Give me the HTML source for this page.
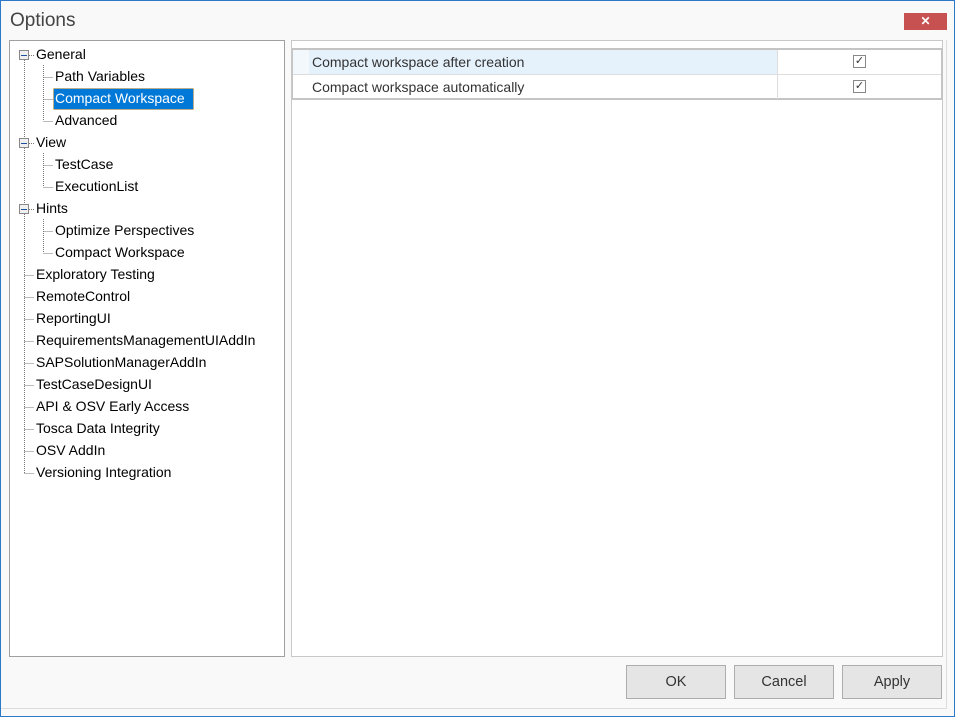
<!DOCTYPE html>
<html><head><meta charset="utf-8"><style>
body{margin:0;width:955px;height:717px;overflow:hidden;background:#fff;font-family:"Segoe UI","Liberation Sans",sans-serif}
.win{position:absolute;left:0;top:0;width:953px;height:715px;border:1px solid #2b79c7;background:#f9f9f9}
.title{position:absolute;left:9px;top:9px;font-size:19px;color:#444}
.close{position:absolute;left:903px;top:12px;width:43px;height:17px;background:#c75050;color:#fff;font-size:12px;text-align:center;line-height:17px;font-weight:bold}
.lp{position:absolute;left:9px;top:40px;width:274px;height:615px;border:1px solid #a0a0a0;background:#fff}
.rp{position:absolute;left:291px;top:40px;width:650px;height:615px;border:1px solid #c8c8c8;background:#fff}
.grid{position:absolute;left:0px;top:7px;width:648px;height:48px;border:2px solid #c4c4c4;border-left:1px solid #c4c4c4;border-right:2px solid #c4c4c4}
.row{position:absolute;left:0;width:648px;height:24px;font-size:14px;color:#333;line-height:24px}
.c1{position:absolute;left:0;width:484px;height:24px;padding-left:19px;box-sizing:border-box}
.c2{position:absolute;left:484px;width:164px;height:24px;border-left:1px solid #ddd}
.cb{position:absolute;left:75px;top:5px;width:11px;height:11px;border:1px solid #888;background:#fff;font-size:11px;line-height:11px;text-align:center;color:#333}
.btn{position:absolute;top:665px;width:100px;height:34px;border:1px solid #adadad;background:#e5e5e5;font-size:14.5px;color:#333;text-align:center;line-height:32px;box-sizing:border-box}
.bot{position:absolute;left:1px;top:708px;width:945px;height:0;border-top:1px solid #ddd}
.rgt{position:absolute;left:946px;top:40px;height:669px;border-left:1px solid #ddd}
</style></head><body>
<div class="win">
<div class="title">Options</div>
<div class="close">✕</div>
</div>
<div class="bot"></div><div class="rgt"></div>
<div class="lp">
<svg width="274" height="615" style="position:absolute;left:0;top:0" font-family="Segoe UI, Liberation Sans, sans-serif" font-size="14" fill="#000">
<g transform="translate(-9,-40)" stroke="#777" stroke-dasharray="1,1" stroke-width="1" fill="none">
<line x1="23.5" y1="59" x2="23.5" y2="472"/>
<line x1="42.5" y1="64" x2="42.5" y2="120"/>
<line x1="42.5" y1="152" x2="42.5" y2="186"/>
<line x1="42.5" y1="218" x2="42.5" y2="252"/>
<g id="h">
</g>
</g>
<g transform="translate(-9,-40)" id="t"></g>
</svg>
</div>
<div class="rp">
<div class="grid">
<div class="row" style="top:0"><div class="c1" style="background:#e5f1fb;border-left:16px solid #f3f8fc;padding-left:3px">Compact workspace after creation</div><div class="c2"><div class="cb">✓</div></div></div>
<div class="row" style="top:24px;border-top:1px solid #ddd"><div class="c1">Compact workspace automatically</div><div class="c2"><div class="cb">✓</div></div></div>
</div>
</div>
<div class="btn" style="left:626px">OK</div>
<div class="btn" style="left:734px">Cancel</div>
<div class="btn" style="left:842px">Apply</div>
<script>
var items=[["General",0,1],["Path Variables",1],["Compact Workspace",1],["Advanced",1],["View",0,1],["TestCase",1],["ExecutionList",1],["Hints",0,1],["Optimize Perspectives",1],["Compact Workspace",1],["Exploratory Testing",0],["RemoteControl",0],["ReportingUI",0],["RequirementsManagementUIAddIn",0],["SAPSolutionManagerAddIn",0],["TestCaseDesignUI",0],["API & OSV Early Access",0],["Tosca Data Integrity",0],["OSV AddIn",0],["Versioning Integration",0]];
var ns="http://www.w3.org/2000/svg",h=document.getElementById('h'),t=document.getElementById('t');
function el(p,n,a){var e=document.createElementNS(ns,n);for(var k in a)e.setAttribute(k,a[k]);p.appendChild(e);return e;}
items.forEach(function(it,i){var y=54+22*i,l=it[1];
var x0=l?42.5:23.5;
el(h,'line',{x1:it[2]?28:x0,y1:y+.5,x2:l?52:33,y2:y+.5});
if(i==2){el(t,'rect',{x:52.5,y:87.5,width:140,height:21,fill:'#0078d7',stroke:'#f0a030','stroke-dasharray':'1,1'});}
var tx=el(t,'text',{x:l?54:35,y:y+4,fill:i==2?'#fff':'#000'});tx.textContent=it[0];
if(it[2]){el(t,'rect',{x:18.5,y:y-4.5,width:9,height:9,fill:'#f0f0f0',stroke:'#888'});el(t,'line',{x1:20,y1:y+.5,x2:26,y2:y+.5,stroke:'#1e50a0'});}
});
</script>
</body></html>
